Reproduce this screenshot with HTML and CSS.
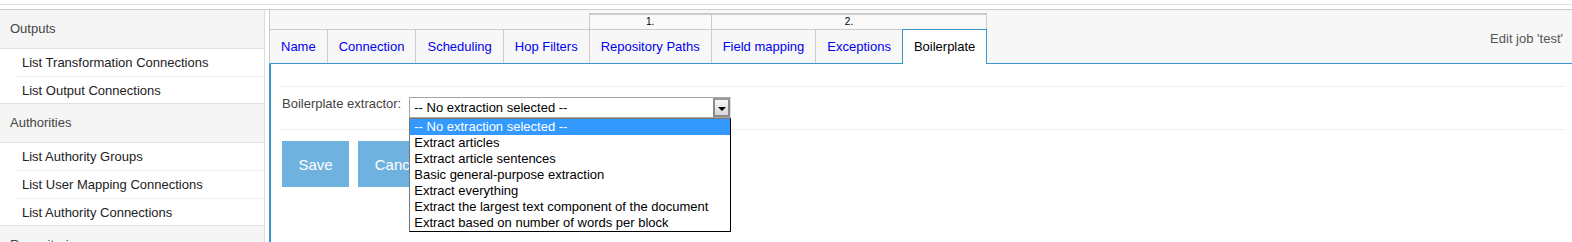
FILE: index.html
```html
<!DOCTYPE html>
<html lang="en">

<head>
    <meta charset="UTF-8">
    <meta name="viewport" content="width=device-width, initial-scale=1.0">
    <link rel="stylesheet" href="styles.css">
    <title>Edit job</title>
</head>

<body>
    <div class="topbar"></div>
    <div class="page">
        <nav class="sidebar">
            <div class="nav-head">Outputs</div>
            <ul class="nav-list">
                <li>List Transformation Connections</li>
                <li>List Output Connections</li>
            </ul>
            <div class="nav-head">Authorities</div>
            <ul class="nav-list">
                <li>List Authority Groups</li>
                <li>List User Mapping Connections</li>
                <li>List Authority Connections</li>
            </ul>
            <div class="nav-head">Repositories</div>
        </nav>

        <div class="job">
            <div class="job-head">
                <div class="tabs">
                    <div class="tab-group">
                        <div class="group-label"></div>
                        <div class="tab-row">
                            <a class="tab">Name</a>
                            <a class="tab">Connection</a>
                            <a class="tab">Scheduling</a>
                            <a class="tab">Hop Filters</a>
                        </div>
                    </div>
                    <div class="tab-group numbered">
                        <div class="group-label">1.</div>
                        <div class="tab-row">
                            <a class="tab">Repository Paths</a>
                        </div>
                    </div>
                    <div class="tab-group numbered">
                        <div class="group-label">2.</div>
                        <div class="tab-row">
                            <a class="tab">Field mapping</a>
                            <a class="tab">Exceptions</a>
                            <a class="tab active">Boilerplate</a>
                        </div>
                    </div>
                </div>
                <div class="job-title">Edit job 'test'</div>
            </div>

            <div class="job-body">
                <div class="form-row">
                    <label class="form-label">Boilerplate extractor:</label>
                    <div class="select-wrap">
                        <div class="select">
                            <span>-- No extraction selected --</span>
                            <span class="arrow"></span>
                        </div>
                        <ul class="options">
                            <li class="selected">-- No extraction selected --</li>
                            <li>Extract articles</li>
                            <li>Extract article sentences</li>
                            <li>Basic general-purpose extraction</li>
                            <li>Extract everything</li>
                            <li>Extract the largest text component of the document</li>
                            <li>Extract based on number of words per block</li>
                        </ul>
                    </div>
                </div>
                <div class="buttons">
                    <button class="btn">Save</button>
                    <button class="btn">Cancel</button>
                </div>
            </div>
        </div>
    </div>
</body>

</html>
```

FILE: styles.css
```css
body {
    margin: 0;
    height: 242px;
    overflow: hidden;
    background: #fff;
    color: #333;
    font-family: "Liberation Sans", Arial, sans-serif;
    font-size: 13px;
}

ul {
    margin: 0;
    padding: 0;
    list-style: none;
}

.topbar {
    height: 4px;
    margin-bottom: 4px;
    border-bottom: 1px solid #e2e2e2;
}

.page {
    display: flex;
    gap: 4px;
    border-top: 1px solid #ccc;
}

/* left menu */
.sidebar {
    flex: none;
    width: 264px;
    border-right: 1px solid #ddd;
}

.nav-head {
    height: 38px;
    line-height: 38px;
    padding-left: 10px;
    background: #f5f5f5;
    color: #444;
}

.nav-list {
    border-top: 1px solid #e3e3e3;
    border-bottom: 1px solid #e3e3e3;
}

.nav-list li {
    height: 27px;
    line-height: 27px;
    margin-left: 17px;
    padding-left: 5px;
    color: #222;
    border-bottom: 1px dotted #ddd;
}

.nav-list li:last-child {
    height: 26px;
    border-bottom: none;
}

/* job panel */
.job {
    flex: 1;
    min-width: 0;
}

.job-head {
    display: flex;
    justify-content: space-between;
    height: 50px;
    padding-top: 3px;
    background: #f7f7f7;
    border-left: 1px solid #ccc;
    border-bottom: 1px solid #3a96d0;
}

.tabs {
    display: flex;
    align-items: flex-end;
}

.group-label {
    height: 14px;
    line-height: 14px;
    font-size: 10px;
    color: #000;
    text-align: center;
}

.numbered .group-label {
    margin-left: -1px;
    background: #f9f9f9;
    border-top: 2px solid #ccc;
    border-left: 1px solid #ccc;
    border-right: 1px solid #ccc;
}

.tab-row {
    display: flex;
}

.tab {
    height: 33px;
    line-height: 33px;
    padding: 0 11px;
    color: #0000ee;
    text-decoration: none;
    border-top: 1px solid #ccc;
    border-right: 1px solid #ccc;
}

.tab.active {
    position: relative;
    height: 34px;
    margin-left: -1px;
    margin-bottom: -1px;
    background: #fff;
    color: #000;
    border: 1px solid #3a96d0;
    border-bottom: none;
}

.job-title {
    align-self: center;
    padding-right: 9px;
    color: #555;
}

.job-body {
    height: 200px;
    padding: 22px 9px 0 10px;
    border-left: 2px solid #3a96d0;
}

.form-row {
    display: flex;
    align-items: flex-start;
    gap: 8px;
    padding: 10px 0 11px 1px;
    border-top: 1px dotted #ddd;
    border-bottom: 1px dotted #ddd;
}

.form-label {
    line-height: 13px;
    color: #444;
}

.select-wrap {
    position: relative;
}

.select {
    display: flex;
    justify-content: space-between;
    width: 322px;
    height: 21px;
    box-sizing: border-box;
    border: 1px solid #a6a6a6;
    border-right-color: #ddd;
    color: #000;
    line-height: 19px;
}

.select span:first-child {
    padding-left: 4px;
}

.arrow {
    position: relative;
    width: 13px;
    border: 2px solid #8a8a8a;
    border-top-color: #9a9a9a;
    background: linear-gradient(#f6f6f6, #d6d6d6);
}

.arrow::after {
    content: "";
    position: absolute;
    left: 3px;
    top: 7px;
    border-left: 4px solid transparent;
    border-right: 4px solid transparent;
    border-top: 4px solid #000;
}

.options {
    position: absolute;
    top: 100%;
    left: 0;
    width: 322px;
    box-sizing: border-box;
    background: #fff;
    border: 1px solid #000;
    border-left-color: #777;
    border-top-color: #777;
}

.options li {
    height: 16px;
    line-height: 16px;
    padding-left: 4px;
    color: #000;
    white-space: nowrap;
}

.options li.selected {
    background: #3399ff;
    color: #fff;
}

.buttons {
    display: flex;
    gap: 9px;
    margin-top: 11px;
    padding-left: 1px;
}

.btn {
    height: 46px;
    padding: 0 16.5px;
    border: none;
    background: #6fb2e0;
    color: #fff;
    font-family: inherit;
    font-size: 15px;
}
```
